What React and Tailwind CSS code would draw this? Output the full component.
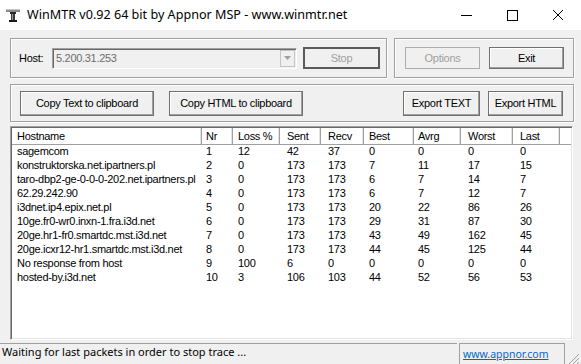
import React from "react";

const UI_FONT = "font-['Liberation_Sans',Arial,sans-serif] text-[11px] tracking-[-0.3px]";

const COLUMNS = [
  { name: "Hostname", width: 190, pad: 5 },
  { name: "Nr", width: 31, pad: 4 },
  { name: "Loss %", width: 47, pad: 5 },
  { name: "Sent", width: 41, pad: 7 },
  { name: "Recv", width: 43, pad: 7 },
  { name: "Best", width: 50, pad: 5 },
  { name: "Avrg", width: 47, pad: 4 },
  { name: "Worst", width: 52, pad: 7 },
  { name: "Last", width: 47, pad: 7 },
];

const ROWS = [
  ["sagemcom", 1, 12, 42, 37, 0, 0, 0, 0],
  ["konstruktorska.net.ipartners.pl", 2, 0, 173, 173, 7, 11, 17, 15],
  ["taro-dbp2-ge-0-0-0-202.net.ipartners.pl", 3, 0, 173, 173, 6, 7, 14, 7],
  ["62.29.242.90", 4, 0, 173, 173, 6, 7, 12, 7],
  ["i3dnet.ip4.epix.net.pl", 5, 0, 173, 173, 20, 22, 86, 26],
  ["10ge.fr0-wr0.inxn-1.fra.i3d.net", 6, 0, 173, 173, 29, 31, 87, 30],
  ["20ge.hr1-fr0.smartdc.mst.i3d.net", 7, 0, 173, 173, 43, 49, 162, 45],
  ["20ge.icxr12-hr1.smartdc.mst.i3d.net", 8, 0, 173, 173, 44, 45, 125, 44],
  ["No response from host", 9, 100, 6, 0, 0, 0, 0, 0],
  ["hosted-by.i3d.net", 10, 3, 106, 103, 44, 52, 56, 53],
];

function AppIcon() {
  return (
    <svg width="16" height="16" viewBox="0 0 16 16">
      <rect x="1" y="2" width="14" height="3" fill="#8a8a8a" />
      <rect x="1" y="2" width="14" height="1" fill="#c8c8c8" />
      <rect x="5" y="5" width="6" height="2" fill="#2a2a2a" />
      <rect x="6" y="7" width="4" height="6" fill="#3a3a3a" />
      <rect x="7" y="7" width="1" height="6" fill="#9a9a9a" />
      <rect x="4" y="13" width="8" height="2" fill="#1a1a1a" />
    </svg>
  );
}

function Button({ children, className = "", disabled, primary }) {
  return (
    <div
      className={`flex items-center justify-center bg-[#f0f0f0] ${
        primary
          ? "border-2 border-[#5a5a5a]"
          : disabled
          ? "border border-[#adadad]"
          : "border border-[#707070] shadow-[inset_-1px_-1px_0_#a0a0a0,inset_1px_1px_0_#ffffff]"
      } ${disabled ? "text-[#a0a0a0]" : "text-black"} ${className}`}
    >
      {children}
    </div>
  );
}

function GroupBox({ children, className = "" }) {
  return (
    <div
      className={`flex items-center border border-[#a0a0a0] shadow-[1px_1px_0_#ffffff,inset_1px_1px_0_#ffffff] ${className}`}
    >
      {children}
    </div>
  );
}

export default function App() {
  return (
    <div className="w-[581px] h-[364px] bg-[#f0f0f0] flex flex-col overflow-hidden">
      {/* title bar */}
      <div className="h-[30px] bg-white flex items-center shrink-0">
        <div className="pl-[5px] pr-[6px] flex items-center">
          <AppIcon />
        </div>
        <div className="flex-1 font-['Noto_Sans',sans-serif] text-[12.6px] text-black">
          WinMTR v0.92 64 bit by Appnor MSP - www.winmtr.net
        </div>
        <div className="flex h-full">
          <div className="w-[46px] flex items-center justify-center">
            <div className="w-[11px] h-px bg-black" />
          </div>
          <div className="w-[46px] flex items-center justify-center">
            <div className="w-[11px] h-[11px] border border-black" />
          </div>
          <div className="w-[46px] flex items-center justify-center">
            <svg width="12" height="12" viewBox="0 0 12 12">
              <path d="M1 1 L11 11 M11 1 L1 11" stroke="#000" strokeWidth="1" />
            </svg>
          </div>
        </div>
      </div>

      <div className={`flex flex-col px-[10px] pr-[7px] pt-[8px] ${UI_FONT}`}>
        {/* host row */}
        <div className="flex gap-[7px] h-[40px]">
          <GroupBox className="w-[377px] pl-[8px]">
            <span className="w-[33px]">Host:</span>
            <div className="w-[245px] h-[21px] flex items-center border border-t-[#a0a0a0] border-l-[#a0a0a0] border-r-white border-b-white shadow-[inset_1px_1px_0_#696969] bg-[#f0f0f0]">
              <span className="flex-1 pl-[3px] text-[#6d6d6d]">5.200.31.253</span>
              <div className="w-[15px] h-[17px] mr-[1px] flex items-center justify-center border border-[#c4c4c4] bg-[#f0f0f0]">
                <svg width="7" height="4" viewBox="0 0 7 4">
                  <path d="M0 0 H7 L3.5 4 Z" fill="#a0a0a0" />
                </svg>
              </div>
            </div>
            <Button primary disabled className="w-[77px] h-[22px] ml-[6px]">
              Stop
            </Button>
          </GroupBox>
          <GroupBox className="flex-1 pl-[10px] gap-[9px]">
            <Button disabled className="w-[75px] h-[22px]">
              Options
            </Button>
            <Button className="w-[75px] h-[22px]">Exit</Button>
          </GroupBox>
        </div>

        {/* export row */}
        <GroupBox className="mt-[6px] h-[38px] pl-[9px] pr-[10px]">
          <Button className="w-[134px] h-[25px]">Copy Text to clipboard</Button>
          <Button className="w-[134px] h-[25px] ml-[15px]">Copy HTML to clipboard</Button>
          <div className="flex-1" />
          <Button className="w-[77px] h-[25px]">Export TEXT</Button>
          <Button className="w-[75px] h-[25px] ml-[8px]">Export HTML</Button>
        </GroupBox>

        {/* list view */}
        <div className="mt-[4px] h-[214px] mr-[1px] bg-white border border-t-[#a0a0a0] border-l-[#a0a0a0] border-r-white border-b-white shadow-[inset_1px_1px_0_#696969,inset_-1px_-1px_0_#e3e3e3] pt-[1px] pl-[1px] flex flex-col">
          <div className="flex h-[17px] shrink-0">
            {COLUMNS.map((col) => (
              <div
                key={col.name}
                style={{ width: col.width, paddingLeft: col.pad }}
                className="h-full flex items-center bg-white border-r border-b border-[#a0a0a0] shadow-[inset_-1px_0_0_#e3e3e3]"
              >
                {col.name}
              </div>
            ))}
            <div className="flex-1 h-full bg-white border-b border-[#a0a0a0] mr-[1px]" />
          </div>
          <div className="flex flex-col -mt-[1px]">
            {ROWS.map((row) => (
              <div key={row[0]} className="flex h-[14px] items-center">
                {row.map((cell, i) => (
                  <div
                    key={i}
                    style={{ width: COLUMNS[i].width, paddingLeft: COLUMNS[i].pad }}
                    className="whitespace-nowrap overflow-hidden"
                  >
                    {cell}
                  </div>
                ))}
              </div>
            ))}
          </div>
        </div>
      </div>

      {/* status bar */}
      <div className="mt-[3px] flex-1 flex items-stretch font-['Noto_Sans',sans-serif] text-[11px]">
        <div className="w-[457px] border-t border-[#a0a0a0] flex items-center pl-[2px] pb-[5px]">
          Waiting for last packets in order to stop trace ...
        </div>
        <div className="w-[106px] ml-[2px] border-t border-l border-r border-[#a0a0a0] flex items-center pl-[3px] pt-[1px] text-[10.5px]">
          <span className="text-[#0066cc] underline">www.appnor.com</span>
        </div>
        <div className="flex-1 flex items-end justify-end pr-[1px] pb-[1px]">
          <svg width="12" height="12" viewBox="0 0 12 12">
            <path d="M11 1 L1 11 M11 5 L5 11 M11 9 L9 11" stroke="#a0a0a0" strokeWidth="1" />
          </svg>
        </div>
      </div>
    </div>
  );
}
